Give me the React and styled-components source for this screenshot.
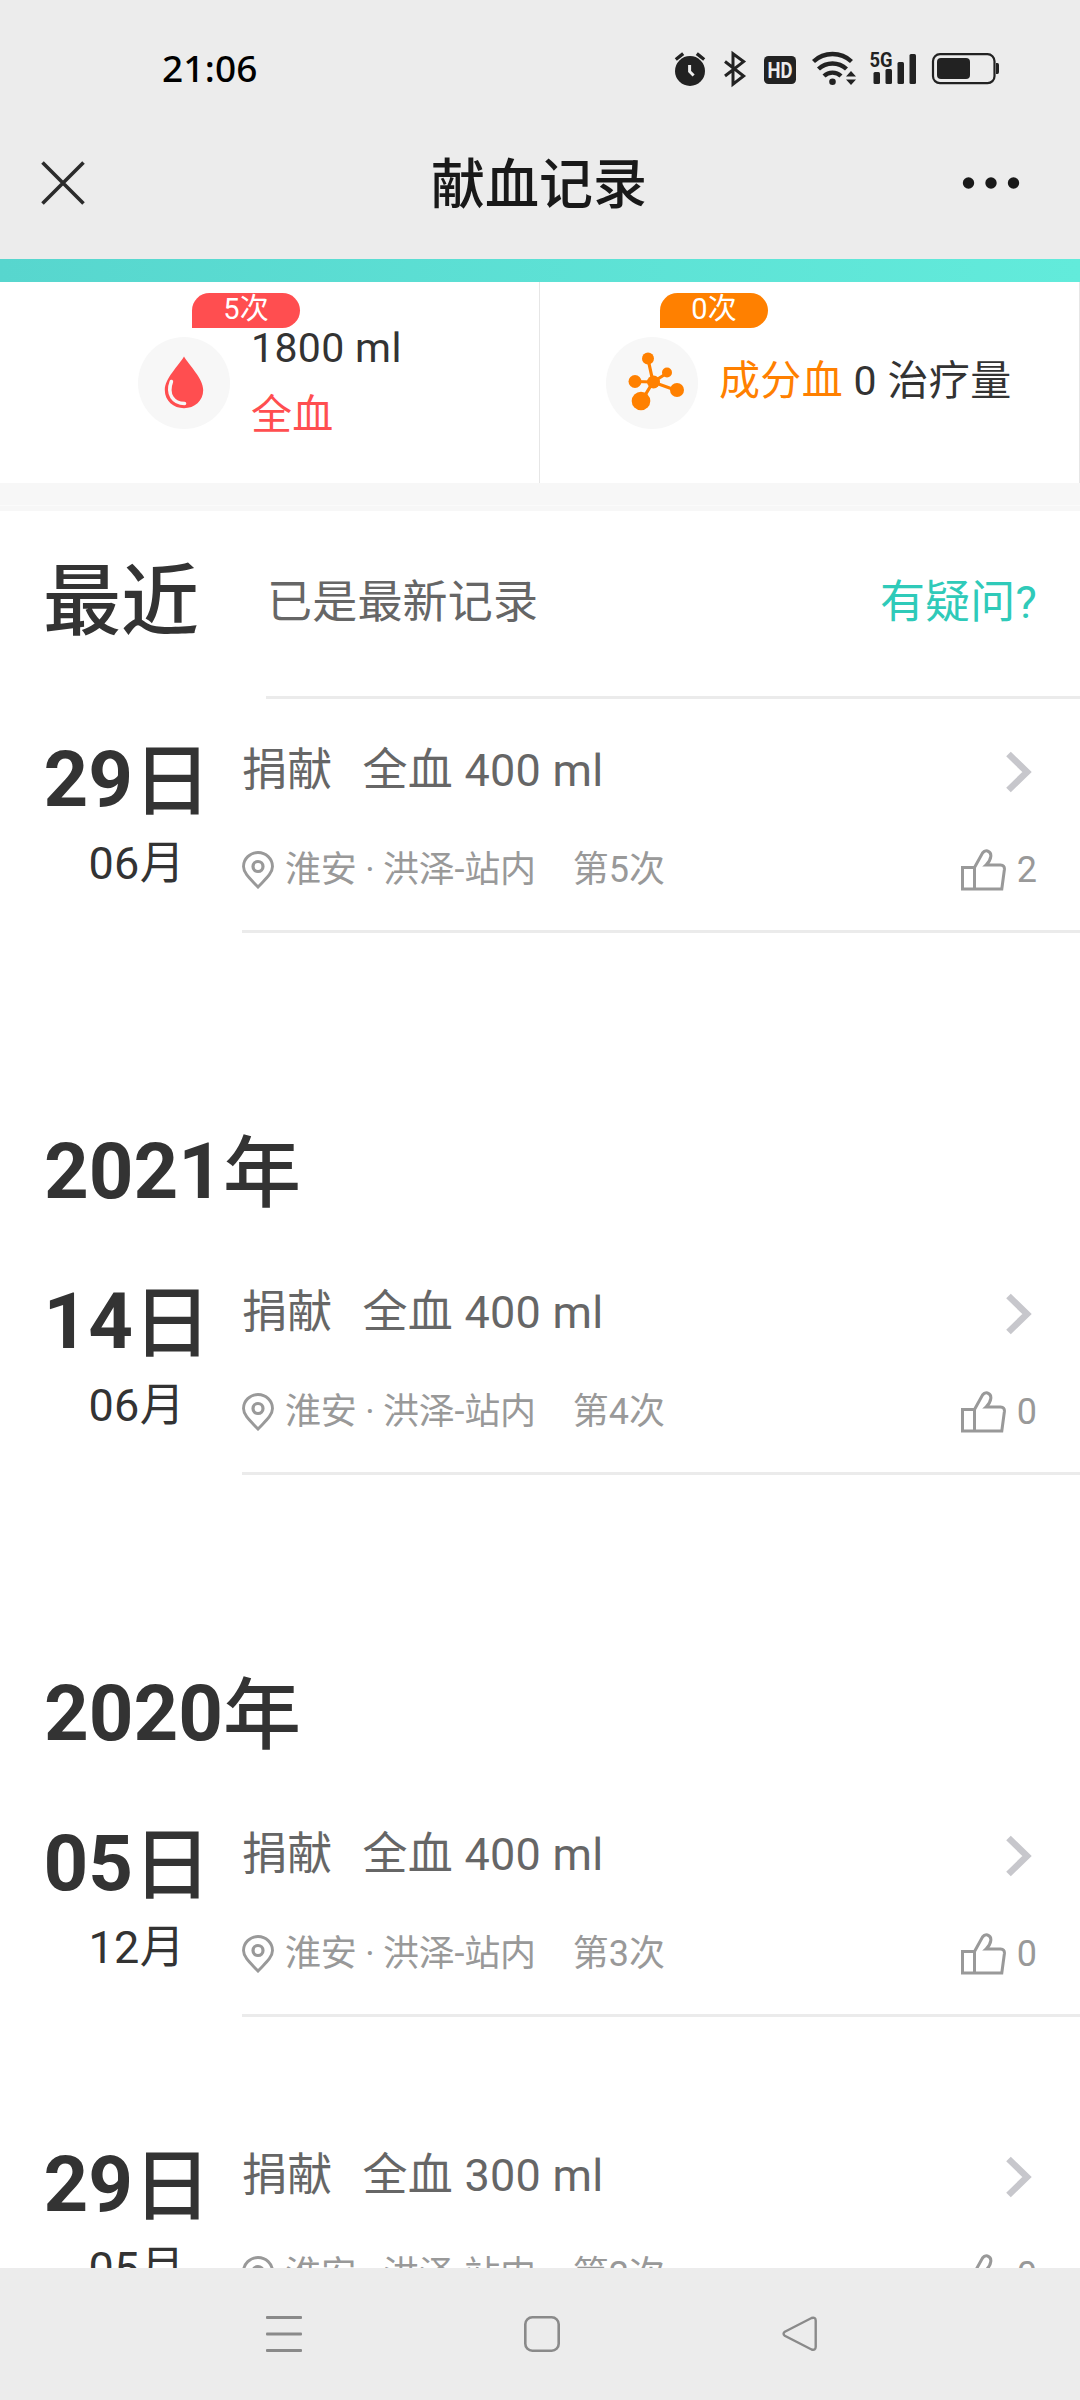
import React from "react";
import styled, { createGlobalStyle } from "styled-components";

const years = [
  {
    year: null,
    records: [{ day: "29", month: "06", amount: 400, times: 5, likes: 2 }],
  },
  {
    year: "2021",
    records: [{ day: "14", month: "06", amount: 400, times: 4, likes: 0 }],
  },
  {
    year: "2020",
    records: [
      { day: "05", month: "12", amount: 400, times: 3, likes: 0 },
      { day: "29", month: "05", amount: 300, times: 2, likes: 0 },
    ],
  },
];

const StatusIcons = () => (
  <svg width="330" height="40" viewBox="672 48 330 40" fill="#222">
    {/* alarm */}
    <circle cx="690" cy="71" r="15" />
    <path
      d="M675.8 59.5l7.4-5.8M704.2 59.5l-7.4-5.8"
      stroke="#222"
      strokeWidth="3.4"
    />
    <path d="M689.6 65v6.5l4 4" stroke="#eee" strokeWidth="3" fill="none" />
    {/* bluetooth */}
    <path
      d="M725 61.5l18.6 14.5-10.6 8.2V53.8l10.6 7.8L725 76"
      fill="none"
      stroke="#222"
      strokeWidth="3"
    />
    {/* hd */}
    <rect x="764" y="56" width="32" height="28" rx="4.5" />
    <text
      x="780"
      y="77.8"
      textAnchor="middle"
      fill="#ececec"
      fontFamily="Roboto, sans-serif"
      fontWeight="700"
      fontSize="22"
      textLength="25"
      lengthAdjust="spacingAndGlyphs"
    >
      HD
    </text>
    {/* wifi */}
    <g fill="none" stroke="#222" strokeWidth="4.4">
      <path d="M813.5 61.5a28 28 0 0 1 38 0" />
      <path d="M818.5 69a20.5 20.5 0 0 1 28 0" />
      <path d="M824 76a12.5 12.5 0 0 1 17 0" />
    </g>
    <circle cx="832.5" cy="81.7" r="3.3" />
    <path d="M851 71l5 5.5h-10zM851 85l5-5.5h-10z" />
    {/* signal */}
    <text
      x="869.5"
      y="66.8"
      fontFamily="Roboto, sans-serif"
      fontWeight="700"
      fontSize="21"
      textLength="23"
      lengthAdjust="spacingAndGlyphs"
    >
      5G
    </text>
    <rect x="873.5" y="72" width="6.5" height="12" rx="1.5" />
    <rect x="885.5" y="69" width="6.5" height="15" rx="1.5" />
    <rect x="897.5" y="62" width="6.5" height="22" rx="1.5" />
    <rect x="909.5" y="54" width="6.5" height="30" rx="1.5" />
    {/* battery */}
    <rect
      x="933"
      y="54.2"
      width="61.5"
      height="29"
      rx="7"
      fill="none"
      stroke="#222"
      strokeWidth="2.2"
    />
    <rect x="937" y="58" width="33" height="21" rx="4" />
    <path d="M996 63h1.5q1.5 0 1.5 2v7q0 2-1.5 2H996z" />
  </svg>
);

const DropIcon = () => (
  <svg width="40" height="53" viewBox="0 0 40 53">
    <path
      d="M20 .5C15 9 .8 22.5.8 34 .8 45 9.5 52.2 20 52.2S39.2 45 39.2 34C39.2 22.5 25 9 20 .5z"
      fill="#ff4e50"
    />
    <path
      d="M7.4 25.500C2.5 38.5 9.5 47.5 20.5 47.5"
      fill="none"
      stroke="#f7f7f7"
      strokeWidth="3.6"
      strokeLinecap="round"
    />
  </svg>
);

const MoleculeIcon = () => (
  <svg width="92" height="92" viewBox="0 0 92 92" fill="#ff8000">
    <path
      d="M42 22l5 23 15-9.500M29 44.500l18 .5 25 9M47 45L35 65"
      fill="none"
      stroke="#ff8000"
      strokeWidth="3.2"
    />
    <circle cx="42" cy="21.5" r="6" />
    <circle cx="61" cy="35.5" r="5" />
    <circle cx="29" cy="44.5" r="6.5" />
    <circle cx="47.5" cy="45" r="6.5" />
    <circle cx="71" cy="53" r="7" />
    <circle cx="35" cy="64" r="9.3" />
  </svg>
);

const PinIcon = () => (
  <svg width="32" height="38" viewBox="0 0 32 38" fill="none" stroke="#999">
    <path
      d="M16 36C9 28.5 1.5 22.5 1.5 15.500a14.500 14 0 0 1 29 0C30.5 22.5 23 28.5 16 36z"
      strokeWidth="2.9"
    />
    <circle cx="16" cy="15.5" r="5" strokeWidth="3.2" />
  </svg>
);

const ThumbIcon = () => (
  <svg width="45" height="42" viewBox="0 0 45 42" fill="none" stroke="#999">
    <path
      d="M1.500 18.500h12V40h-12zM13.500 18.500L21.5 4Q23.5 1.3 26.5 2q3.800 1.200 3.300 5.500Q29.3 12 25 16h14.500q4.300.3 3.900 4.500L40.8 40H13.5"
      strokeWidth="3"
    />
  </svg>
);

const ChevronIcon = () => (
  <svg width="27" height="42" viewBox="0 0 27 42" fill="none">
    <path d="M2.500 3L21 21 2.500 39" stroke="#c7c7cc" strokeWidth="6.6" />
  </svg>
);

const Record = ({ record }) => (
  <RecordRow>
    <DateColumn>
      <Day>
        {record.day}
        <Han>日</Han>
      </Day>
      <Month>{record.month}月</Month>
    </DateColumn>
    <RecordBody>
      <RecordTitle>
        <span>捐献</span>
        <Amount>全血 {record.amount} ml</Amount>
        <ChevronIcon />
      </RecordTitle>
      <RecordMeta>
        <PinIcon />
        <Place>淮安 · 洪泽-站内</Place>
        <span>第{record.times}次</span>
        <Likes>
          <ThumbIcon />
          <span>{record.likes}</span>
        </Likes>
      </RecordMeta>
    </RecordBody>
  </RecordRow>
);

const App = () => {
  return (
    <>
      <GlobalStyle />
      <Screen>
        <StatusBar>
          <Clock>21:06</Clock>
          <StatusIcons />
        </StatusBar>
        <TitleBar>
          <svg width="46" height="46" viewBox="0 0 46 46">
            <path
              d="M2.5 2.5l41 41M43.5 2.5l-41 41"
              stroke="#2b2b2b"
              strokeWidth="3.6"
            />
          </svg>
          <Title>献血记录</Title>
          <svg width="58" height="14" viewBox="0 0 58 14" fill="#191919">
            <circle cx="6.5" cy="7" r="5.7" />
            <circle cx="29" cy="7" r="5.7" />
            <circle cx="51.5" cy="7" r="5.7" />
          </svg>
        </TitleBar>
        <Banner />
        <Stats>
          <Stat>
            <Badge color="#ff4e50">5次</Badge>
            <StatIcon>
              <DropIcon />
            </StatIcon>
            <StatText>
              <p>1800 ml</p>
              <p>
                <Tint color="#ff4e50">全血</Tint>
              </p>
            </StatText>
          </Stat>
          <Stat>
            <Badge color="#ff8000">0次</Badge>
            <StatIcon>
              <MoleculeIcon />
            </StatIcon>
            <StatText>
              <p>
                <Tint color="#ff8000">成分血</Tint> 0 治疗量
              </p>
            </StatText>
          </Stat>
        </Stats>
        <Gap />
        <List>
          <RecentRow>
            <RecentLabel>
              <Han>最近</Han>
            </RecentLabel>
            <RecentBody>
              <span>已是最新记录</span>
              <Help>有疑问?</Help>
            </RecentBody>
          </RecentRow>
          {years.map(({ year, records }) => (
            <section key={year || "recent"}>
              {year && (
                <Year>
                  {year}
                  <Han>年</Han>
                </Year>
              )}
              {records.map((record) => (
                <Record key={record.times} record={record} />
              ))}
            </section>
          ))}
        </List>
        <NavBar>
          <svg width="36" height="36" viewBox="0 0 36 36" fill="#8a8a8a">
            <rect width="36" height="3" rx="1" />
            <rect y="16.5" width="36" height="3" rx="1" />
            <rect y="33" width="36" height="3" rx="1" />
          </svg>
          <svg width="36" height="36" viewBox="0 0 36 36" fill="none">
            <rect
              x="1.3"
              y="1.3"
              width="33.4"
              height="33.4"
              rx="7"
              stroke="#8a8a8a"
              strokeWidth="2.6"
            />
          </svg>
          <svg width="36" height="36" viewBox="0 0 36 36" fill="none">
            <path
              d="M2.8 15.8L29.5 2Q33.5.8 33.7 4.500v26.500q-.2 3.700-4.200 2.500L2.8 19.700q-2.500-1.900 0-3.900z"
              stroke="#8a8a8a"
              strokeWidth="2.4"
            />
          </svg>
        </NavBar>
      </Screen>
    </>
  );
};

const GlobalStyle = createGlobalStyle`
  * {
    box-sizing: border-box;
    margin: 0;
    padding: 0;
  }
  body {
    background: #fff;
    font-family: Roboto, "Noto Sans CJK SC", sans-serif;
  }
  svg {
    display: block;
    flex: none;
  }
`;

const Screen = styled.div`
  width: 1080px;
  height: 2400px;
  display: flex;
  flex-direction: column;
  overflow: hidden;
  color: #333;
`;

const StatusBar = styled.header`
  height: 108px;
  padding: 28px 78px 0 162px;
  display: flex;
  justify-content: space-between;
  align-items: center;
  background: #ececec;
`;

const Clock = styled.span`
  font-family: "Noto Sans", sans-serif;
  font-size: 37px;
  font-weight: 500;
  line-height: 50px;
  letter-spacing: 0.2px;
  color: #000;
`;

const TitleBar = styled.div`
  height: 151px;
  padding: 0 60px 1px 40px;
  display: grid;
  grid-template-columns: 58px 1fr 58px;
  align-items: center;
  background: #ececec;
`;

const Title = styled.h1`
  padding: 6px 0 0;
  margin-left: -20px;
  font-size: 54px;
  font-weight: 500;
  line-height: 70px;
  text-align: center;
  text-indent: 38px;
  color: #191919;
`;

const Banner = styled.div`
  height: 23px;
  flex: none;
  background: linear-gradient(to right, #57d6ce, #62ebdb);
`;

const Stats = styled.div`
  height: 201px;
  flex: none;
  display: grid;
  grid-template-columns: 1fr 1fr;
`;

const Stat = styled.div`
  position: relative;
  padding-left: 138px;
  display: flex;
  align-items: center;
  border-right: 1px solid #e6e6e6;
  & + & {
    padding-left: 66px;
  }
`;

const Badge = styled.span`
  position: absolute;
  top: 11px;
  left: 192px;
  width: 108px;
  height: 35px;
  border-radius: 18px 18px 18px 0;
  background: ${(props) => props.color};
  color: #fff;
  font-size: 29px;
  line-height: 32px;
  text-align: center;
  ${Stat} + ${Stat} & {
    left: 120px;
  }
`;

const StatIcon = styled.div`
  width: 92px;
  height: 92px;
  display: flex;
  justify-content: center;
  align-items: center;
  border-radius: 50%;
  background: #f7f7f7;
`;

const StatText = styled.div`
  padding: 0 0 2px 21px;
  font-size: 41px;
  line-height: 67px;
  letter-spacing: 0.35px;
`;

const Tint = styled.span`
  color: ${(props) => props.color};
`;

const Gap = styled.div`
  height: 23px;
  flex: none;
  background: #f7f7f7;
  border-bottom: 1px solid #fbfbfb;
`;

const List = styled.main`
  flex: 1;
  min-height: 0;
  overflow: hidden;
  border-top: 5px solid #f7f7f7;
`;

const RecentRow = styled.div`
  height: 188px;
  display: flex;
`;

const RecentLabel = styled.h2`
  width: 266px;
  padding: 44px 0 0 43px;
  font-size: 78px;
  line-height: 90px;
`;

const RecentBody = styled.div`
  flex: 1;
  padding: 62px 43px 0 1px;
  display: flex;
  justify-content: space-between;
  border-bottom: 3px solid #ebebeb;
  font-size: 45px;
  line-height: 60px;
  letter-spacing: 0.2px;
  color: #666;
`;

const Help = styled.a`
  color: #2fcab9;
`;

const Han = styled.span`
  font-weight: 500;
  line-height: 1;
  vertical-align: -3px;
`;

const Year = styled.h2`
  height: 221px;
  padding: 107px 0 0 44px;
  font-size: 78px;
  line-height: 90px;
`;

const RecordRow = styled.article`
  height: 321px;
  display: flex;
  align-items: flex-start;
`;

const DateColumn = styled.div`
  width: 242px;
  padding: 36px 0 0 43.5px;
`;

const Day = styled.h3`
  font-size: 78px;
  line-height: 90px;
`;

const Month = styled.p`
  padding: 9px 0 0 45px;
  font-size: 45px;
  line-height: 60px;
  letter-spacing: 0.3px;
`;

const RecordBody = styled.div`
  flex: 1;
  height: 234px;
  padding: 42px 43px 0 0;
  border-bottom: 3px solid #ebebeb;
`;

const RecordTitle = styled.div`
  display: flex;
  align-items: center;
  font-size: 45px;
  line-height: 60px;
  letter-spacing: 0.25px;
  color: #666;
  svg {
    margin: 1px 4px 0 auto;
  }
`;

const Amount = styled.span`
  padding-left: 30px;
`;

const RecordMeta = styled.div`
  padding-top: 44px;
  display: flex;
  align-items: center;
  font-size: 36px;
  line-height: 50px;
  color: #999;
`;

const Place = styled.span`
  padding: 0 37px 0 11px;
  letter-spacing: -0.25px;
`;

const Likes = styled.div`
  margin-left: auto;
  display: flex;
  align-items: center;
  gap: 11px;
`;

const NavBar = styled.nav`
  height: 132px;
  padding: 0 262px 0 266px;
  display: flex;
  justify-content: space-between;
  align-items: center;
  background: #ececec;
`;

export default App;
